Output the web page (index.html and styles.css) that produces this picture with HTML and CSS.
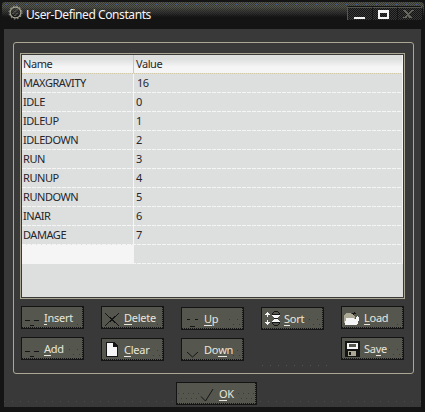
FILE: index.html
```html
<!DOCTYPE html>
<html lang="en">
<head>
<meta charset="utf-8">
<title>User-Defined Constants</title>
<link rel="stylesheet" href="styles.css">
</head>
<body>
<div class="window">
  <header class="titlebar">
    <svg class="gear" width="15" height="15" viewBox="0 0 15 15" fill="none"><circle cx="7.5" cy="7.5" r="5.4" stroke="#a8a695" stroke-width="1.2"/><circle cx="7.5" cy="7.5" r="6.5" stroke="#a8a695" stroke-dasharray="1.5 1.9"/><path d="M4 8.500h2v-2h2v-2h2M6 10.500h2v-2h2" stroke="#55564d"/></svg>
    <h1 class="title">User-Defined Constants</h1>
    <div class="controls">
      <span class="control"><svg width="24" height="13" shape-rendering="crispEdges"><path d="M6 9h11v2H6z" fill="#f5f5f5"/></svg></span>
      <span class="control"><svg width="24" height="13" shape-rendering="crispEdges"><path d="M5 2h11v9H5zM7 5v4h7V5z" fill="#f5f5f5" fill-rule="evenodd"/></svg></span>
      <span class="control"><svg width="24" height="13" shape-rendering="crispEdges"><path d="M5 2h3v1h1v1h1v1h1V4h1V3h1V2h3v1h-2v1h-1v1h-1v1h-1v1h1v1h1v1h1v1h-3V9h-1V8h-1v1H9v1H5V9h2V8h1V7h1V6H8V5H7V4H6V3H5z" fill="#66675c"/></svg></span>
    </div>
  </header>
  <main class="client">
    <section class="group">
      <div class="grid">
        <div class="row head"><span>Name</span><span>Value</span></div>
        <div class="row"><span>MAXGRAVITY</span><span class="ten">16</span></div>
        <div class="row"><span>IDLE</span><span>0</span></div>
        <div class="row"><span>IDLEUP</span><span>1</span></div>
        <div class="row"><span>IDLEDOWN</span><span>2</span></div>
        <div class="row"><span>RUN</span><span>3</span></div>
        <div class="row"><span>RUNUP</span><span>4</span></div>
        <div class="row"><span>RUNDOWN</span><span>5</span></div>
        <div class="row"><span>INAIR</span><span>6</span></div>
        <div class="row"><span>DAMAGE</span><span>7</span></div>
        <div class="row"><span class="selected"></span><span></span></div>
      </div>
      <div class="actions">
        <button class="btn plain"><svg class="icon" width="16" height="16"><path d="M1 10.500h5M10 10.500h5M6 15.500h4" stroke="#141414"/></svg><span><u>I</u>nsert</span></button>
        <button class="btn plain"><svg class="icon" width="16" height="16" shape-rendering="crispEdges"><path d="M1 3l14 13M15 3L1 16" stroke="#141414"/></svg><span><u>D</u>elete</span></button>
        <button class="btn low"><svg class="icon" width="16" height="16"><path d="M3 8.500h3M11 8.500h3M6 15.500h5" stroke="#141414"/></svg><span><u>U</u>p</span></button>
        <button class="btn low"><svg class="icon" width="16" height="16" shape-rendering="crispEdges"><path d="M3 1h1v1h1v1h1v1H4v2H3V4H1V3h1V2h1zM3 9h1v2h2v1H5v1H4v1H3v-1H2v-1H1v-1h2z" fill="#f5f5f5"/><path d="M10 0h4v1h1v1h1v3h-1v1h-1v3h1v1h1v3h-1v1h-1v1h-4v-1H9v-1H8v-3h1V9h1V6H9V5H8V2h1V1h1z" fill="#141414"/><path d="M10 1h4v1h1v1H9V2h1zM9 12h6v1h-1v1h-4v-1H9z" fill="#55564d"/><path d="M8 4h8v1h-1v1h-1v1h-4V6H9V5H8zM10 8h4v1h1v1h1v1H8v-1h1V9h1z" fill="#f5f5f5"/></svg><span><u>S</u>ort</span></button>
        <button class="btn plain"><svg class="icon" width="16" height="16" shape-rendering="crispEdges"><path d="M0 5h1V4h1V3h5v1h3v2h1v3H3v6H1v-2H0z" fill="#aaa895"/><path d="M2 8h8v1h2V7h1V6h1v1h1v4h-1v3h-1v1H1v-4h1z" fill="#f5f5f5"/><path d="M7 4h1V3h2V2h1v2h-1v1H9V4zM11 3h1v1h-1z" fill="#141414"/></svg><span><u>L</u>oad</span></button>
        <button class="btn"><svg class="icon" width="16" height="16"><path d="M1 10.500h5M10 10.500h5M6 15.500h4" stroke="#141414"/></svg><span><u>A</u>dd</span></button>
        <button class="btn low"><svg class="icon" width="16" height="16" shape-rendering="crispEdges"><path d="M2 0h9v1h1v1h1v1h1v12H2z" fill="#141414"/><path d="M3 1h6v4h4v9H3z" fill="#f5f5f5"/></svg><span><u>C</u>lear</span></button>
        <button class="btn low"><svg class="icon" width="16" height="16"><path d="M3 10l5.500 5L14 10" fill="none" stroke="#141414"/></svg><span>Do<u>w</u>n</span></button>
        <button class="btn save"><svg class="icon" width="16" height="16" shape-rendering="crispEdges"><path d="M1 0h15v16H1z" fill="#141414"/><path d="M3 2h11v6H3z" fill="#f5f5f5"/><path d="M5 3h7v3H5z" fill="#55564d"/><path d="M4 10h8v5H4z" fill="#aaa895"/><path d="M5 11h2v3H5z" fill="#141414"/></svg><span>Sa<u>v</u>e</span></button>
      </div>
      <div class="specks"></div>
    </section>
    <button class="btn ok"><svg class="icon" width="16" height="16"><path d="M2 10.500L6.500 15L14 3" fill="none" stroke="#141414"/></svg><span><u>O</u>K</span></button>
  </main>
</div>
</body>
</html>
```
FILE: styles.css
```css
* { box-sizing: border-box; }
body { margin: 0; background: #141414; font: 11px/15px "Noto Sans", "Open Sans", sans-serif; }
.window { width: 425px; height: 412px; padding: 2px 4px 5px; }
.titlebar {
  display: flex; height: 27px; margin: 0 -3px 0 -2px; padding-left: 6px; border-radius: 3px 4px 0 0;
  background:
    linear-gradient(90deg, transparent 0 4px, #35539d 4px 5px) 0 2px / 5px 1px repeat-x,
    repeating-conic-gradient(rgba(20,20,20,0.45) 0 25%, transparent 0 50%) 0 5px / 2px 2px repeat,
    linear-gradient(#55564d 0 5px, #45463f 7px, #303030 11px, #141414 15px);
}
.gear { margin-top: 3px; flex: none; }
.title { margin: 4px 0 0 3px; font-size: 12px; font-weight: 400; line-height: 18px; color: #f5f5f5; white-space: nowrap; letter-spacing: -0.42px; }
.controls { display: flex; margin: 4px 3px 0 auto; width: 74px; height: 14px; border-top: 1px solid #141414; border-left: 1px solid #55564d; background: #141414; }
.control {
  flex: 1; height: 13px; border-top: 1px solid #55564d; border-right: 1px solid #141414;
  background: repeating-conic-gradient(#373737 0 25%, #141414 0 50%) 0 0 / 2px 2px;
}
.control svg { display: block; }
.client {
  height: 378px; padding: 13px 7px 0 9px;
  background: linear-gradient(90deg, #4b4b49 1px, transparent 1px) 16px 372px / 8px 1px repeat-x, #393939;
}
.group { height: 332px; padding: 10px 8px 0 6px; border: 1px solid #aaa895; border-radius: 3px; }
.grid { height: 246px; width: 385px; background: #dddfde; border: 1px solid #aaa895; box-shadow: inset 0 0 0 1px #393939; padding: 1px; letter-spacing: -0.45px; }
.row {
  display: grid; grid-template-columns: 112px 1fr; height: 19px; color: #26262c; line-height: 18px;
  background: repeating-linear-gradient(90deg, #f5f5f5 0 4px, #dddfde 4px 5px) 0 18px / 100% 1px no-repeat;
  border-right: 1px solid #f5f5f5;
}
.row span { padding-left: 1px; border-right: 1px solid #f5f5f5; height: 18px; }
.row span + span { padding-left: 2px; border-right: 0; }
.row span.ten { padding-left: 3px; }
.row .selected { background: #f5f5f5; height: 19px; }
.head { background: repeating-linear-gradient(90deg, #cfc9a8 0 1px, #dddfde 1px 2px) 0 18px / 100% 1px no-repeat, linear-gradient(#dddfde 4px, #f5f5f5 12px); }
.head span { border-color: #cfc9a8; }
.actions { display: grid; grid-template-columns: repeat(5, 63px); grid-template-rows: 24px 24px; column-gap: 17px; row-gap: 7px; margin: 7px 0 0 1px; }
.btn {
  display: flex; width: 63px; height: 23px; padding: 2px 0 0 2px; font: inherit; text-align: left; color: #e8e6dc;
  border: 1px solid #141414; border-radius: 0; white-space: nowrap; letter-spacing: -0.25px;
  background:
    repeating-linear-gradient(90deg, #141414 0 1px, #55564d 1px 2px) 0 100% / 100% 1px no-repeat,
    repeating-linear-gradient(#141414 0 1px, #55564d 1px 2px) 100% 0 / 1px 100% no-repeat,
    linear-gradient(90deg, #393939 1px, transparent 1px) 47px 11px / 5px 1px no-repeat,
    linear-gradient(90deg, #393939 1px, transparent 1px) 55px 11px / 5px 1px no-repeat,
    linear-gradient(90deg, #393939 1px, transparent 1px) 51px 16px / 5px 1px no-repeat,
    linear-gradient(90deg, #393939 1px, transparent 1px) 57px 16px / 5px 1px no-repeat,
    #55564d;
}
.plain {
  background:
    repeating-linear-gradient(90deg, #141414 0 1px, #55564d 1px 2px) 0 100% / 100% 1px no-repeat,
    repeating-linear-gradient(#141414 0 1px, #55564d 1px 2px) 100% 0 / 1px 100% no-repeat,
    linear-gradient(90deg, #393939 1px, transparent 1px) 55px 17px / 5px 1px no-repeat,
    #55564d;
}
.icon { flex: none; margin-top: 1px; }
.btn span { margin-left: 4px; line-height: 16px; margin-top: 1px; }
.btn u { text-decoration: none; border-bottom: 1px solid #e8e6dc; display: inline-block; height: 15px; }
.low { margin-top: 1px; }
.save { grid-column: 5; }
.specks { width: 68px; height: 1px; margin: 4px 0 0 242px; background: linear-gradient(90deg, #55564d 1px, transparent 1px) 0 0 / 8px 1px; }
.ok {
  width: 81px; margin: 8px 0 0 163px; padding-left: 22px;
  background:
    repeating-linear-gradient(90deg, #141414 0 1px, #55564d 1px 2px) 0 100% / 100% 1px no-repeat,
    repeating-linear-gradient(#141414 0 1px, #55564d 1px 2px) 100% 0 / 1px 100% no-repeat,
    linear-gradient(90deg, #393939 1px, transparent 1px) 0 0 / 5px 5px content-box,
    #55564d;
  background:
    repeating-linear-gradient(90deg, #141414 0 1px, #55564d 1px 2px) 0 100% / 100% 1px no-repeat,
    repeating-linear-gradient(#141414 0 1px, #55564d 1px 2px) 100% 0 / 1px 100% no-repeat,
    linear-gradient(90deg, #55564d, #55564d) 22px 0 / 38px 19px no-repeat,
    linear-gradient(90deg, #393939 1px, transparent 1px) 1px 10px / 5px 1px repeat-x,
    linear-gradient(90deg, #393939 1px, transparent 1px) 4px 15px / 5px 1px repeat-x,
    #55564d;
}
```
